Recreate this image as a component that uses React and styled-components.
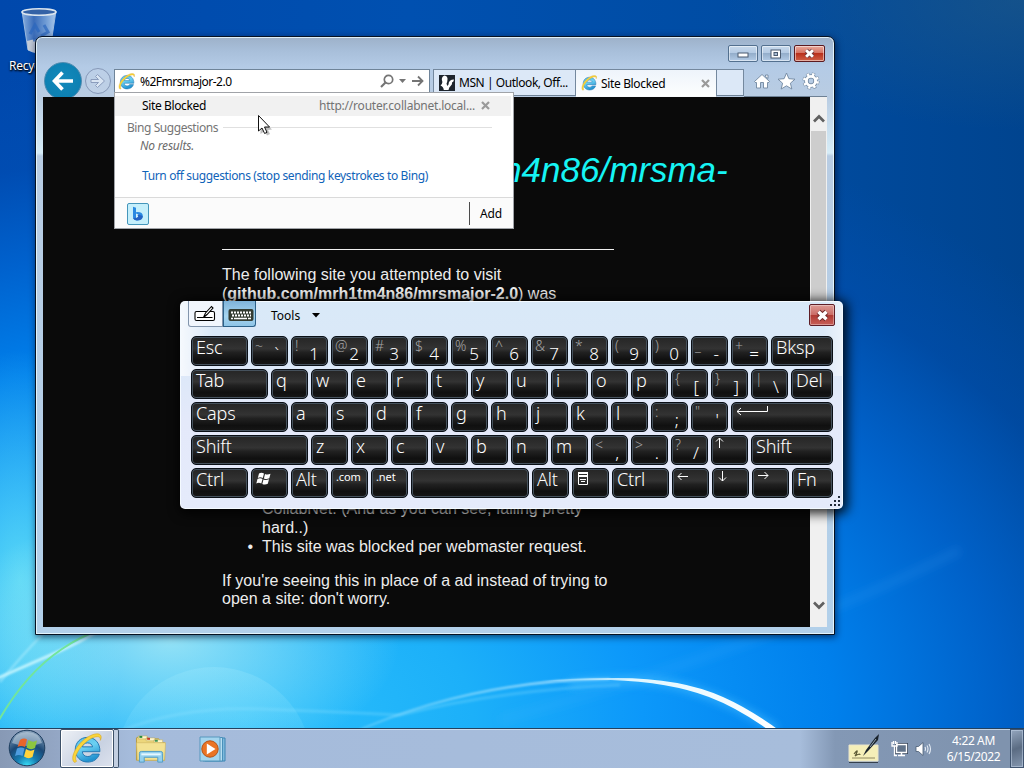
import React from "react";
import styled, { createGlobalStyle, css } from "styled-components";

const GlobalStyle = createGlobalStyle`
  * { box-sizing: border-box; }
  html, body { margin: 0; padding: 0; overflow: hidden; }
  body { font-family: "Noto Sans", "Open Sans", sans-serif; font-size: 12px; color: #000; }
  svg { display: block; flex: none; }
`;

const Desktop = styled.main`
  position: relative;
  width: 1024px;
  height: 768px;
  overflow: hidden;
  display: flex;
  flex-direction: column;
  justify-content: space-between;
  background:
    radial-gradient(ellipse 230px 130px at 170px 640px, rgba(185, 240, 245, 0.75), rgba(150, 230, 245, 0) 100%),
    radial-gradient(ellipse 110px 230px at 20px 580px, rgba(110, 232, 245, 0.75), rgba(90, 220, 245, 0) 100%),
    radial-gradient(ellipse 300px 130px at 1024px 0, rgba(40, 95, 135, 0.5), rgba(20, 80, 135, 0) 100%),
    radial-gradient(ellipse 1060px 660px at 240px 720px, #2cc0fc 0%, #1cb0f9 22%, #0c98fa 38%, #0080ec 56%, rgba(0, 104, 214, 0.8) 72%, rgba(0, 82, 186, 0.4) 86%, rgba(0, 72, 170, 0) 100%),
    linear-gradient(90deg, #0048ac 0%, #0050b0 40%, #004ca2 75%, #00448f 100%);
`;

const Wallpaper = styled.svg`
  position: absolute;
  inset: 0;
`;

const DesktopIcon = styled.div`
  width: 64px;
  margin-left: 7px;
  padding-top: 7px;
  display: flex;
  flex-direction: column;
  align-items: center;
`;

const IconCaption = styled.span`
  margin-top: 2px;
  color: #fff;
  font-size: 12px;
  line-height: 18px;
  letter-spacing: -0.3px;
  white-space: nowrap;
  text-shadow: 0 1px 2px #000, 1px 1px 2px #000;
`;

const BrowserWindow = styled.section`
  position: absolute;
  z-index: 0;
  left: 35px;
  top: 36px;
  width: 800px;
  height: 599px;
  display: flex;
  flex-direction: column;
  padding: 0 7px 7px;
  border: 1px solid #061222;
  border-radius: 7px 7px 0 0;
  background:
    linear-gradient(180deg, rgba(255, 255, 255, 0) 60px, rgba(225, 248, 255, 0.75) 116px, rgba(255, 255, 255, 0) 119px),
    linear-gradient(180deg, #9db1c9 0, #a8bfda 14px, #b4cbe6 30px, #b9cce2 60px, #b2d0ea 100%);
  box-shadow: inset 0 0 0 1px rgba(235, 250, 255, 0.85), 1px 2px 7px rgba(0, 10, 40, 0.65);
`;

const Caption = styled.header`
  height: 32px;
  flex: none;
  display: flex;
  justify-content: flex-end;
  gap: 3px;
  padding: 8px 2px 0 0;
`;

const closeFill = css`
  border-color: #5b1a20;
  background: linear-gradient(180deg, #e9a99c 0, #d67363 45%, #b9301c 50%, #cf6047 100%);
`;

const CaptionButton = styled.button`
  width: ${(p) => (p.$close ? 31 : 30)}px;
  height: 17px;
  padding: 0;
  display: flex;
  align-items: center;
  justify-content: center;
  border: 1px solid #53708f;
  border-radius: 2px;
  background: linear-gradient(180deg, #c7d9ec 0, #b5cbe4 45%, #94aecb 50%, #b3cbe6 100%);
  box-shadow: inset 0 0 0 1px rgba(255, 255, 255, 0.5);
  ${(p) => p.$close && closeFill}
`;

const NavRow = styled.div`
  height: 28px;
  flex: none;
  display: flex;
  align-items: flex-start;
`;

const BackButton = styled.button`
  width: 38px;
  height: 38px;
  margin: -7px 3px 0 1px;
  padding: 0;
  flex: none;
  display: flex;
  align-items: center;
  justify-content: center;
  border: 1px solid #4d8bb0;
  border-radius: 50%;
  background: radial-gradient(circle at 50% 45%, #1289bb, #0d80b2 70%, #2e8cb8);
`;

const ForwardButton = styled.button`
  width: 26px;
  height: 26px;
  margin: -1px 3px 0 0;
  padding: 0;
  flex: none;
  display: flex;
  align-items: center;
  justify-content: center;
  border: 1px solid #8799b8;
  border-radius: 50%;
  background: rgba(200, 215, 235, 0.35);
`;

const AddressBar = styled.div`
  position: relative;
  width: 316px;
  height: 24px;
  padding: 0 5px 0 3px;
  display: flex;
  align-items: center;
  border: 1px solid #6f8499;
  background: #fff;
`;

const AddressText = styled.span`
  flex: 1;
  padding-left: 5px;
  font-size: 12px;
  letter-spacing: -0.5px;
`;

const AddressTools = styled.div`
  display: flex;
  align-items: center;
  gap: 5px;
`;

const Suggestions = styled.div`
  position: absolute;
  z-index: 3;
  left: -1px;
  top: 22px;
  width: 400px;
  height: 137px;
  display: flex;
  flex-direction: column;
  border: 1px solid #a0a3a8;
  background: #fff;
`;

const SuggestionRow = styled.div`
  height: 20px;
  margin: 3px 2px 0 0;
  padding: 0 21px 1px 27px;
  display: flex;
  align-items: center;
  background: #f1f1f1;
`;

const SuggestionTitle = styled.span`
  flex: 1;
  letter-spacing: -0.37px;
`;

const SuggestionUrl = styled.span`
  margin-right: 6px;
  color: #737373;
  letter-spacing: -0.22px;
`;

const GroupHeading = styled.div`
  height: 22px;
  padding: 1px 21px 0 12px;
  display: flex;
  align-items: center;
  gap: 5px;
  color: #757575;
  letter-spacing: -0.43px;
  &::after { content: ""; flex: 1; height: 1px; background: #e0e0e0; }
`;

const EmptyNote = styled.em`
  margin-top: 1px;
  padding-left: 25px;
  line-height: 14px;
  color: #6b6b6b;
  letter-spacing: -0.2px;
`;

const SuggestionLink = styled.a`
  margin-top: 14px;
  padding-left: 27px;
  line-height: 17px;
  color: #0f63b9;
  letter-spacing: -0.37px;
`;

const SuggestionFooter = styled.div`
  height: 31px;
  margin-top: auto;
  padding: 1px 0 0 12px;
  display: flex;
  align-items: center;
  justify-content: space-between;
  border-top: 1px solid #dadada;
  background: #fbfbfb;
`;

const BingTile = styled.div`
  width: 22px;
  height: 22px;
  display: flex;
  align-items: center;
  justify-content: center;
  border: 1px solid #4596bb;
  border-radius: 2px;
  background: #c5effb;
`;

const AddButton = styled.div`
  height: 23px;
  width: 44px;
  padding-right: 1px;
  display: flex;
  align-items: center;
  justify-content: center;
  border-left: 1px solid #4c4c4c;
  letter-spacing: -0.2px;
`;

const TabStrip = styled.div`
  flex: 1;
  height: 28px;
  margin-left: 3px;
  display: flex;
  align-items: flex-start;
`;

const Tab = styled.div`
  width: ${(p) => p.$width}px;
  height: ${(p) => (p.$active ? 28 : 27)}px;
  padding: 0 6px 0 5px;
  display: flex;
  align-items: center;
  gap: 4px;
  border: 1px solid #74889e;
  border-left-width: ${(p) => (p.$first ? 1 : 0)}px;
  border-bottom-color: ${(p) => (p.$active ? "#f8fafc" : "#6e8195")};
  background: ${(p) => (p.$active ? "linear-gradient(180deg, #eef4fb, #fdfefe)" : "#dce8f7")};
`;

const TabTitle = styled.span`
  flex: 1;
  white-space: nowrap;
  letter-spacing: ${(p) => p.$tracking}px;
`;

const CommandIcons = styled.div`
  flex: 1;
  height: 28px;
  padding: 0 7px 4px 9px;
  display: flex;
  align-items: center;
  justify-content: space-between;
  border-bottom: 1px solid #6e8195;
`;

const Viewport = styled.div`
  position: relative;
  flex: 1;
  min-height: 0;
  display: flex;
  background: #0a0a0a;
`;

const PageBody = styled.article`
  flex: 1;
  min-width: 0;
  overflow: hidden;
  padding-left: 179px;
  color: #ededed;
  font: 16px/18.4px "Liberation Sans", Arial, sans-serif;
`;

const PageTitle = styled.h1`
  margin: 52px 0 0;
  height: 100px;
  color: #16f4f4;
  font-size: 35px;
  font-weight: 400;
  font-style: italic;
  line-height: 42px;
  white-space: nowrap;
`;

const Rule = styled.hr`
  width: 392px;
  height: 1px;
  margin: 0;
  border: 0;
  background: #f0f0f0;
`;

const Paragraph = styled.p`
  width: 392px;
  margin: ${(p) => p.$top}px 0 0;
`;

const ReasonList = styled.ul`
  width: 392px;
  height: 253px;
  margin: 0;
  padding-left: 40px;
  display: flex;
  flex-direction: column;
  justify-content: flex-end;
  gap: 0.6px;
`;

const Reason = styled.li`
  display: list-item;
  &::marker { content: "${(p) => (p.$continued ? "" : "•\\00a0\\00a0")}"; }
`;

const Scrollbar = styled.div`
  width: 17px;
  display: flex;
  flex-direction: column;
  align-items: center;
  background: #f0f0f0;
`;

const ScrollArrow = styled.div`
  height: ${(p) => p.$height}px;
  width: 17px;
  display: flex;
  justify-content: center;
  padding-top: ${(p) => p.$offset}px;
`;

const ScrollThumb = styled.div`
  width: 15px;
  height: 290px;
  background: #cdcdcd;
`;

const KeyboardPanel = styled.section`
  position: absolute;
  z-index: 1;
  left: 180px;
  top: 301px;
  width: 663px;
  height: 208px;
  display: flex;
  flex-direction: column;
  padding: 0 10px 0 11px;
  border-radius: 5px;
  background:
    linear-gradient(90deg, rgba(255, 255, 255, 0.75), rgba(255, 255, 255, 0) 5%, rgba(255, 255, 255, 0) 97%, rgba(255, 255, 255, 0.5)) 0 0 / 100% 75px no-repeat,
    linear-gradient(180deg, #d9e9f8 0, #dbe8f8 60px, #e4e9fa 120px, #e5ebfb 100%);
  box-shadow: inset 0 0 0 1px #f4faff, 2px 2px 11px 3px rgba(0, 0, 0, 0.8);
`;

const PanelHeader = styled.header`
  height: 35px;
  flex: none;
  display: flex;
  align-items: flex-start;
  margin: 0 -3px;
`;

const ModeTab = styled.div`
  width: ${(p) => (p.$active ? 33 : 35)}px;
  height: 26px;
  padding: ${(p) => (p.$active ? "2px 0 0 2px" : "0 2px 0 0")};
  display: flex;
  align-items: center;
  justify-content: center;
  border: 1px solid ${(p) => (p.$active ? "#2b6088" : "#8295ac")};
  border-top: 0;
  border-radius: ${(p) => (p.$active ? "0 0 3px 0" : "0 0 0 3px")};
  background: ${(p) => (p.$active ? "linear-gradient(180deg, #7fb3d9, #a6d5f0 60%, #8ec4e6)" : "#f1f6fd")};
`;

const ToolsMenu = styled.div`
  flex: 1;
  height: 29px;
  padding-left: 15px;
  display: flex;
  align-items: center;
  gap: 12px;
`;

const PanelClose = styled.button`
  width: 26px;
  height: 22px;
  margin: 3px 1px 0 0;
  padding: 0;
  display: flex;
  align-items: center;
  justify-content: center;
  border: 1px solid #5e1d26;
  border-radius: 2px;
  background: linear-gradient(180deg, #dc9a94 0, #cb6d67 48%, #b03a33 52%, #c75f58 100%);
  box-shadow: inset 0 0 0 1px rgba(255, 255, 255, 0.35);
`;

const KeyRows = styled.div`
  display: flex;
  flex-direction: column;
  gap: 3px;
`;

const KeyRow = styled.div`
  display: flex;
  gap: 3px;
`;

const KeyCap = styled.div`
  width: ${(p) => p.$width}px;
  height: 30px;
  padding: ${(p) => (p.$dual ? "0 8px 0 3px" : "0 0 0 5px")};
  display: flex;
  align-items: flex-start;
  justify-content: ${(p) => (p.$dual ? "space-between" : "flex-start")};
  overflow: hidden;
  border: 1px solid #0a0f16;
  border-radius: 5px;
  background: linear-gradient(180deg, #252525 0, #333 42%, #212121 55%, #101010 80%, #161616 100%);
  box-shadow: inset 0 0 0 1px #46525d;
  color: #fff;
`;

const KeyLabel = styled.span`
  margin-left: -1px;
  font-size: ${(p) => (p.$small ? 11 : 18)}px;
  line-height: ${(p) => (p.$small ? 16 : 21)}px;
  letter-spacing: ${(p) => (p.$small ? -0.1 : -0.15)}px;
  font-weight: ${(p) => (p.$small ? 400 : 350)};
  white-space: nowrap;
`;

const ShiftLabel = styled.span`
  color: #a6a6a6;
  font-size: 14px;
  font-weight: 350;
  line-height: 18px;
`;

const MainLabel = styled.span`
  font-size: 17px;
  font-weight: 350;
  line-height: 34px;
`;

const KeyGlyph = styled.div`
  margin-left: ${(p) => p.$shift}px;
  padding-top: ${(p) => p.$top}px;
`;

const Grip = styled.svg`
  position: absolute;
  right: 3px;
  bottom: 3px;
`;

const Pointer = styled.svg`
  position: absolute;
  z-index: 2;
  left: 257px;
  top: 114px;
`;

const Taskbar = styled.footer`
  position: relative;
  height: 40px;
  display: flex;
  align-items: center;
  border-top: 1px solid #23415f;
  background: linear-gradient(90deg, #8799b5 0, #93a6c4 55px, #a5bbdb 130px, #a7bddb 800px, #8398b5 835px, #7f93ae 1000px);
  box-shadow: inset 0 1px 0 rgba(222, 236, 250, 0.7);
`;

const StartButton = styled.div`
  width: 60px;
  height: 39px;
  padding-left: 8px;
`;

const TaskButton = styled.div`
  width: 54px;
  height: 39px;
  padding-right: 2px;
  display: flex;
  align-items: center;
  justify-content: center;
  border: 1px solid #3c5068;
  border-radius: 2px;
  background: linear-gradient(135deg, #eef1f6, #c9d2e2 60%, #dce2ee);
  box-shadow: inset 0 0 0 1px #fff;
`;

const TaskStack = styled.div`
  width: 5px;
  height: 39px;
  border: 1px solid #3c5068;
  border-left: 0;
  border-radius: 0 2px 2px 0;
  background: #c3cfe1;
`;

const PinnedIcon = styled.div`
  margin-left: ${(p) => p.$gap}px;
  padding-top: 2px;
`;

const Tray = styled.div`
  margin-left: auto;
  height: 39px;
  display: flex;
  align-items: center;
`;

const TrayIcon = styled.div`
  margin-right: ${(p) => p.$gap}px;
  padding-top: ${(p) => p.$drop || 0}px;
`;

const Clock = styled.div`
  width: 74px;
  text-align: center;
  color: #fff;
  font-size: 12px;
  line-height: 16px;
  letter-spacing: -0.38px;
  padding: 1px 0 0 1px;
`;

const ShowDesktop = styled.div`
  width: 14px;
  height: 39px;
  border: 1px solid #40546f;
  background: linear-gradient(160deg, #94a6be, #5b6c83 50%, #8496ae);
  box-shadow: inset 0 0 0 1px rgba(200, 215, 235, 0.5);
`;

function IeLogo({ size, id }) {
  return (
    <svg width={size} height={size} viewBox="0 0 32 32">
      <defs>
        <linearGradient id={id} x1="0" y1="0" x2="0.4" y2="1">
          <stop offset="0" stopColor="#55bce6" />
          <stop offset="0.5" stopColor="#6bd0f2" />
          <stop offset="1" stopColor="#2292cf" />
        </linearGradient>
      </defs>
      <path
        fill={`url(#${id})`}
        stroke="#2277b2"
        strokeWidth="1"
        fillRule="evenodd"
        d="M17 4.5C9.6 4.5 4.4 10 4.4 17.2S9.8 30 17.2 30c5.900 0 10.400-3 12-8.200h-7.200c-.9 1.600-2.600 2.500-4.700 2.500-3.100 0-5.400-1.800-5.600-5h18.100C30.200 10.700 25 4.500 17 4.500Zm-5.200 9.800c.5-2.600 2.500-4.100 5.300-4.100 2.700 0 4.700 1.500 5.200 4.100Z"
      />
      <path
        fill="#fad53a"
        stroke="#d5a323"
        strokeWidth="0.6"
        d="M3.400 30.300C-.8 26.500 3.500 16.300 11 9 18 2.200 27.700-1.300 30.500 2.200c1.100 1.500.7 3.600-.2 5.400.1-2-.2-3.200-1.600-3.600C24.600 2.800 17.700 6.700 12.300 12.400 6.500 18.500 2.800 26 5.800 29.200c-.7.700-1.600 1.200-2.400 1.100Z"
      />
    </svg>
  );
}

function CloseGlyph({ size, outline }) {
  return (
    <svg width={size} height={size} viewBox="0 0 12 12">
      <path d="M2.300 2.500 9.700 9.500M9.700 2.500 2.300 9.500" stroke={outline} strokeWidth="5" />
      <path d="M2.300 2.500 9.700 9.500M9.700 2.500 2.300 9.500" stroke="#fff" strokeWidth="3.200" />
    </svg>
  );
}

function SmallX() {
  return (
    <svg width="9" height="9" viewBox="0 0 9 9">
      <path d="M1 1 8 8M8 1 1 8" stroke="#9a9a9a" strokeWidth="2.200" />
    </svg>
  );
}

function Arrow({ rotate }) {
  return (
    <svg width="12" height="12" viewBox="0 0 12 12">
      <path
        transform={`rotate(${rotate} 6 6)`}
        d="M1 6.500H11M4.500 3 1 6.500 4.500 10"
        fill="none"
        stroke="#fff"
        strokeWidth="1"
      />
    </svg>
  );
}

const glyphs = {
  win: (
    <svg width="16" height="14" viewBox="0 0 16 14">
      <g fill="#fff">
        <path d="M3 1.500Q5.500.2 8 1.600L6.800 6Q4.300 4.700 1.800 6Z" />
        <path d="M9 2Q11.500 3.200 14.500 1.800L13.300 6.200Q10.500 7.600 7.900 6.400Z" />
        <path d="M1.500 7Q4 5.700 6.500 7L5.300 11.500Q2.800 10.200.3 11.500Z" />
        <path d="M7.500 7.500Q10 8.700 13 7.300L11.800 11.800Q9 13.200 6.300 12Z" />
      </g>
    </svg>
  ),
  menu: (
    <svg width="13" height="14" viewBox="0 0 13 14">
      <path d="M1.500 1v11.500h9V1" fill="none" stroke="#fff" />
      <path d="M1 1h10M1 4h10" stroke="#fff" strokeWidth="2" />
      <path d="M3 7.500h6M4 9.500h4" stroke="#fff" />
    </svg>
  ),
  enter: (
    <svg width="34" height="12" viewBox="0 0 34 12">
      <path d="M1 7.500H31.500V2M5 4 1 7.500 5 11" fill="none" stroke="#fff" />
    </svg>
  ),
  up: <Arrow rotate={90} />,
  down: <Arrow rotate={-90} />,
  left: <Arrow rotate={0} />,
  right: <Arrow rotate={180} />,
};

const glyphShift = { win: -1, menu: -1, enter: -1, up: -3, down: -2, left: -1, right: -1 };

const letters = (text) => text.split("").map((c) => ({ label: c }));
const pairs = (list) => list.map(([shift, main]) => ({ shift, main }));

const rows = [
  [
    { label: "Esc", w: 57 },
    ...pairs([["~", "`"], ["!", "1"], ["@", "2"], ["#", "3"], ["$", "4"], ["%", "5"], ["^", "6"], ["&", "7"], ["*", "8"], ["(", "9"], [")", "0"], ["_", "-"], ["+", "="]]),
    { label: "Bksp", w: 62 },
  ],
  [{ label: "Tab", w: 77 }, ...letters("qwertyuiop"), ...pairs([["{", "["], ["}", "]"], ["|", "\\"]]), { label: "Del", w: 42 }],
  [{ label: "Caps", w: 97 }, ...letters("asdfghjkl"), ...pairs([[":", ";"], ['"', "'"]]), { glyph: "enter", w: 102 }],
  [{ label: "Shift", w: 117 }, ...letters("zxcvbnm"), ...pairs([["<", ","], [">", "."], ["?", "/"]]), { glyph: "up" }, { label: "Shift", w: 82 }],
  [
    { label: "Ctrl", w: 57 }, { glyph: "win" }, { label: "Alt" }, { label: ".com", small: true }, { label: ".net", small: true },
    { label: "", w: 118 }, { label: "Alt" }, { glyph: "menu" }, { label: "Ctrl", w: 57 },
    { glyph: "left" }, { glyph: "down" }, { glyph: "right" }, { label: "Fn", w: 41 },
  ],
];

function Key({ item }) {
  return (
    <KeyCap $width={item.w || 37} $dual={Boolean(item.shift)}>
      {item.shift && <ShiftLabel>{item.shift}</ShiftLabel>}
      {item.main && <MainLabel>{item.main}</MainLabel>}
      {item.label && <KeyLabel $small={item.small}>{item.label}</KeyLabel>}
      {item.glyph && (
        <KeyGlyph $shift={glyphShift[item.glyph]} $top={item.glyph === "win" || item.glyph === "menu" ? 3 : 1}>
          {glyphs[item.glyph]}
        </KeyGlyph>
      )}
    </KeyCap>
  );
}

function TouchKeyboard() {
  return (
    <KeyboardPanel>
      <PanelHeader>
        <ModeTab>
          <svg width="22" height="18" viewBox="0 0 22 18">
            <rect x="1" y="6.500" width="19.500" height="9" rx="1.500" fill="#fff" stroke="#000" strokeWidth="1.100" />
            <path d="M3 12.500h15.500" stroke="#000" />
            <path d="M9.500 12.500 11.500 8 17.500 1.500 19 3 13 9.500Z" fill="#fff" stroke="#000" strokeWidth="1.100" />
          </svg>
        </ModeTab>
        <ModeTab $active>
          <svg width="26" height="14" viewBox="0 0 26 14">
            <rect x="0.500" y="1" width="25" height="12" rx="2" fill="#333b31" />
            <path d="M3 4.500H23M4 7.500H23" stroke="#fff" strokeWidth="2" strokeDasharray="2 1" />
            <path d="M3 10.500H5M6 10.500H19M20 10.500H23" stroke="#fff" strokeWidth="1.600" />
          </svg>
        </ModeTab>
        <ToolsMenu>
          Tools
          <svg width="8" height="5" viewBox="0 0 8 5"><path d="M0 0H8L4 4.500Z" /></svg>
        </ToolsMenu>
        <PanelClose><CloseGlyph size={13} outline="#702a2a" /></PanelClose>
      </PanelHeader>
      <KeyRows>
        {rows.map((row, r) => (
          <KeyRow key={r}>{row.map((item, i) => <Key key={i} item={item} />)}</KeyRow>
        ))}
      </KeyRows>
      <Grip width="10" height="10" viewBox="0 0 10 10" fill="#222c3a">
        <path d="M8 0h2v2H8zM4 4h2v2H4zM8 4h2v2H8zM0 8h2v2H0zM4 8h2v2H4zM8 8h2v2H8z" />
      </Grip>
    </KeyboardPanel>
  );
}

function SuggestionPanel() {
  return (
    <Suggestions>
      <SuggestionRow>
        <SuggestionTitle>Site Blocked</SuggestionTitle>
        <SuggestionUrl>http://router.collabnet.local...</SuggestionUrl>
        <SmallX />
      </SuggestionRow>
      <GroupHeading>Bing Suggestions</GroupHeading>
      <EmptyNote>No results.</EmptyNote>
      <SuggestionLink>Turn off suggestions (stop sending keystrokes to Bing)</SuggestionLink>
      <SuggestionFooter>
        <BingTile>
          <svg width="12" height="15" viewBox="0 0 12 15">
            <path d="M1 .8 4 1.800V6.200Q10.800 5.500 10.800 10T4.500 14.400Q1 14 1 11Z" fill="#2a8ae2" />
            <path d="M4 11.800 6.300 10.500 5.300 8 8.500 9.300 10.800 10Q10.500 14.500 5 14.500 1.800 14.300 1 12Z" fill="#2464c4" />
            <path d="M4 7.500 6.800 8.700 5.500 9 6.200 10.700 4 11.900Z" fill="#d5f3fc" />
          </svg>
        </BingTile>
        <AddButton>Add</AddButton>
      </SuggestionFooter>
    </Suggestions>
  );
}

function Browser() {
  return (
    <BrowserWindow>
      <Caption>
        <CaptionButton>
          <svg width="12" height="9" viewBox="0 0 12 9"><rect x="1" y="4" width="10" height="4" fill="#fff" stroke="#4b5b70" /></svg>
        </CaptionButton>
        <CaptionButton>
          <svg width="12" height="10" viewBox="0 0 12 10">
            <rect x="1" y="1" width="9.500" height="8" fill="#fff" stroke="#4b5b70" />
            <rect x="4" y="3.500" width="3.500" height="3" fill="#a9bdd5" stroke="#4b5b70" />
          </svg>
        </CaptionButton>
        <CaptionButton $close><CloseGlyph size={11} outline="#6d3a3e" /></CaptionButton>
      </Caption>
      <NavRow>
        <BackButton>
          <svg width="22" height="20" viewBox="0 0 22 20">
            <path d="M2 10H21M10.500 1.500 2.500 10 10.500 18.500" fill="none" stroke="#fff" strokeWidth="3.600" />
          </svg>
        </BackButton>
        <ForwardButton>
          <svg width="18" height="16" viewBox="0 0 18 16">
            <path d="M2 6.500H9.500L6.500 3.500 8.500 1.500 15.500 8 8.500 14.500 6.500 12.500 9.500 9.500H2Z" fill="#d9e5f3" stroke="#8b9dbd" />
          </svg>
        </ForwardButton>
        <AddressBar>
          <IeLogo size={17} id="ie-address" />
          <AddressText>%2Fmrsmajor-2.0</AddressText>
          <AddressTools>
            <svg width="14" height="14" viewBox="0 0 14 14">
              <circle cx="8.500" cy="5.500" r="4.200" fill="none" stroke="#747474" strokeWidth="1.700" />
              <path d="M5.500 8.500 1 13" stroke="#747474" strokeWidth="2.200" />
            </svg>
            <svg width="7" height="4" viewBox="0 0 7 4"><path d="M0 0H7L3.500 4Z" fill="#747474" /></svg>
            <svg width="13" height="12" viewBox="0 0 13 12">
              <path d="M1 6H11.500M7 1.500 11.500 6 7 10.500" fill="none" stroke="#747474" strokeWidth="1.800" />
            </svg>
          </AddressTools>
          <SuggestionPanel />
        </AddressBar>
        <TabStrip>
          <Tab $width={143} $first>
            <svg width="16" height="16" viewBox="0 0 16 16">
              <rect width="16" height="16" fill="#1d242d" />
              <path d="M5.500.5Q8.800 1 8.500 4.500 8.400 7 7.500 8.500L8.300 11 9.500 9.500Q9.500 7 11 5.800 12.500 4.500 15 4.500 14.800 6.800 13 7.500 13.500 9.500 11.800 10.800 10 12 9.500 15H4.800Q4.500 11.500 1.500 10.500 3.200 9.500 3.400 7 1.500 2 5.500.5Z" fill="#fff" />
            </svg>
            <TabTitle $tracking={-0.44}>MSN | Outlook, Off...</TabTitle>
          </Tab>
          <Tab $width={141} $active>
            <IeLogo size={16} id="ie-tab" />
            <TabTitle $tracking={-0.35}>Site Blocked</TabTitle>
            <SmallX />
          </Tab>
          <Tab $width={27} />
          <CommandIcons>
            <svg width="18" height="16" viewBox="0 0 18 16">
              <path d="M1.500 8.500 9 1.500 16.500 8.500 15 10 14.500 9.500V15H10.500V9.500H7.500V15H3.500V9.500L3 10ZM12.500 2h2.500v3.500L12.500 3.500Z" fill="#fff" stroke="#71879f" strokeWidth="0.900" />
            </svg>
            <svg width="19" height="18" viewBox="0 0 19 18">
              <path d="M9.500 1 11.900 6.700 18 7.200 13.400 11.200 14.800 17 9.500 13.800 4.200 17 5.600 11.200 1 7.200 7.100 6.700Z" fill="#fff" stroke="#71879f" strokeWidth="0.900" />
            </svg>
            <svg width="18" height="18" viewBox="0 0 18 18">
              <circle cx="9" cy="9" r="6.500" fill="none" stroke="#71879f" strokeWidth="4" strokeDasharray="2.850 2.255" />
              <circle cx="9" cy="9" r="4.600" fill="none" stroke="#71879f" strokeWidth="4.400" />
              <circle cx="9" cy="9" r="6.500" fill="none" stroke="#fff" strokeWidth="3" strokeDasharray="2.250 2.855" strokeDashoffset="-0.300" />
              <circle cx="9" cy="9" r="4.600" fill="none" stroke="#fff" strokeWidth="2.900" />
            </svg>
          </CommandIcons>
        </TabStrip>
      </NavRow>
      <Viewport>
        <PageBody>
          <PageTitle>github.com/mrh1tm4n86/mrsma-</PageTitle>
          <Rule />
          <Paragraph $top={16.4}>
            The following site you attempted to visit (<b>github.com/mrh1tm4n86/mrsmajor-2.0</b>) was
          </Paragraph>
          <ReasonList>
            <Reason $continued>CollabNet. (And as you can see, failing pretty hard..)</Reason>
            <Reason>This site was blocked per webmaster request.</Reason>
          </ReasonList>
          <Paragraph $top={15.6}>
            If you're seeing this in place of a ad instead of trying to open a site: don't worry.
          </Paragraph>
        </PageBody>
        <Scrollbar>
          <ScrollArrow $height={34} $offset={16}>
            <svg width="12" height="10" viewBox="0 0 12 10"><path d="M1 8.500 6 3.500 11 8.500" fill="none" stroke="#606060" strokeWidth="2.700" /></svg>
          </ScrollArrow>
          <ScrollThumb />
          <ScrollArrow $height={206} $offset={180}>
            <svg width="12" height="10" viewBox="0 0 12 10"><path d="M1 1.500 6 6.500 11 1.500" fill="none" stroke="#606060" strokeWidth="2.700" /></svg>
          </ScrollArrow>
        </Scrollbar>
      </Viewport>
    </BrowserWindow>
  );
}

function Background() {
  return (
    <Wallpaper width="1024" height="768" viewBox="0 0 1024 768">
      <defs>
        <filter id="soft" x="-10%" y="-40%" width="120%" height="180%"><feGaussianBlur stdDeviation="1" /></filter>
        <filter id="softer" x="-20%" y="-50%" width="140%" height="200%"><feGaussianBlur stdDeviation="4" /></filter>
        <linearGradient id="bubble" x1="0" y1="0" x2="0" y2="1">
          <stop offset="0" stopColor="#aef0ff" stopOpacity="0.220" />
          <stop offset="0.600" stopColor="#6bdcff" stopOpacity="0.080" />
          <stop offset="1" stopColor="#6bdcff" stopOpacity="0" />
        </linearGradient>
        <linearGradient id="arc" x1="530" x2="780" y1="0" y2="0" gradientUnits="userSpaceOnUse">
          <stop offset="0" stopColor="#bfeaff" stopOpacity="0" />
          <stop offset="0.400" stopColor="#dff6ff" />
          <stop offset="1" stopColor="#fff" />
        </linearGradient>
        <linearGradient id="arcTail" x1="350" x2="660" y1="0" y2="0" gradientUnits="userSpaceOnUse">
          <stop offset="0" stopColor="#c8f1ff" stopOpacity="0.250" />
          <stop offset="0.700" stopColor="#d8f5ff" stopOpacity="0.800" />
          <stop offset="1" stopColor="#fff" stopOpacity="0.300" />
        </linearGradient>
      </defs>
      <circle cx="214" cy="765" r="98" fill="url(#bubble)" />
      <path d="M118 732Q180 706 260 709T400 715Q500 690 620 685" fill="none" stroke="#9be6ff" strokeOpacity="0.250" strokeWidth="3" filter="url(#soft)" />
      <path d="M350 734Q470 680 610 679" fill="none" stroke="url(#arcTail)" strokeWidth="2" filter="url(#soft)" />
      <path d="M500 720Q760 650 960 550" fill="none" stroke="#55b6ff" strokeOpacity="0.130" strokeWidth="9" filter="url(#softer)" />
      <path d="M570 684Q630 676 672 684 729 698 776 730" fill="none" stroke="#4abfff" strokeOpacity="0.700" strokeWidth="7" filter="url(#softer)" />
      <path d="M530 682Q570 678 610 678 679 677 723 697 750 709 780 731L770 731Q738 708 709 697 670 682 610 680Q570 680 530 682Z" fill="url(#arc)" />
      <path d="M-2 678Q30 664 62 650T130 610" fill="none" stroke="#d8fbff" strokeOpacity="0.850" strokeWidth="2.500" filter="url(#soft)" />
      <path d="M0 682Q22 655 44 633" fill="none" stroke="#bff4ff" strokeOpacity="0.500" strokeWidth="2" filter="url(#soft)" />
      <path d="M-1 720Q26 673 62 649 81 636 98 631" fill="none" stroke="#72e59b" strokeWidth="2" />
    </Wallpaper>
  );
}

function RecycleBin() {
  return (
    <svg width="40" height="48" viewBox="0 0 40 48">
      <defs>
        <linearGradient id="bin" x1="0" x2="1">
          <stop offset="0" stopColor="#8ab0df" />
          <stop offset="0.350" stopColor="#3a6cb9" />
          <stop offset="0.700" stopColor="#6f9bd4" />
          <stop offset="1" stopColor="#a9c7ea" />
        </linearGradient>
      </defs>
      <path d="M3 4 9 43Q20 49 31 43L37 4Z" fill="url(#bin)" stroke="#9dbbe0" />
      <path d="M8 34Q19 30 32 35L31 43Q20 49 9 43Z" fill="#d6d8dc" opacity="0.850" />
      <path d="M11 27 16 18 20 25M25 18 29 25 22 29M23 33H14" fill="none" stroke="#2b67bd" strokeWidth="3" opacity="0.700" />
      <ellipse cx="20" cy="5" rx="17" ry="3.300" fill="#3462a6" stroke="#dbe5ee" strokeWidth="1.600" />
    </svg>
  );
}

function StartOrb() {
  return (
    <svg width="38" height="38" viewBox="0 0 38 38">
      <defs>
        <radialGradient id="orb" cx="0.500" cy="1" r="1">
          <stop offset="0" stopColor="#39e0f8" />
          <stop offset="0.300" stopColor="#157cb1" />
          <stop offset="0.600" stopColor="#1b4876" />
          <stop offset="1" stopColor="#8ca4bd" />
        </radialGradient>
      </defs>
      <circle cx="19" cy="19" r="17.800" fill="url(#orb)" stroke="#1d3d5e" />
      <path d="M4 14Q7 3 19 3T34 14Q19 20 4 14Z" fill="#dce8f2" opacity="0.450" />
      <path d="M12 11Q16 8.500 19 10.500L17 18Q13 16 9.500 18Z" fill="#e9652b" />
      <path d="M20.500 11Q25 14 29 11.500L27 19Q23 21.500 18.500 18.500Z" fill="#8dc63f" />
      <path d="M9 19.500Q13 17.500 16.500 19.500L14.500 27Q11 25 7 27Z" fill="#4e9cdf" />
      <path d="M18 20Q22.500 23 26.500 20.500L24.500 28Q20.500 30.500 16 27.500Z" fill="#ffd33c" />
    </svg>
  );
}

function ExplorerIcon() {
  return (
    <svg width="34" height="31" viewBox="0 0 34 32">
      <path d="M2 4V27H31V9H27L25 5H15L13 3H4Z" fill="#ecd67b" stroke="#b69b45" />
      <path d="M4 2h9v3H4zM12 4h9v3h-9zM20 6h9v3h-9z" fill="#fff6cc" stroke="#bba552" strokeWidth="0.500" />
      <path d="M5 2h3v2H5z" fill="#258b3c" /><path d="M13 4h3v2h-3z" fill="#c93725" /><path d="M21 6h3v2h-3z" fill="#3c9252" />
      <path d="M2 9H32L31 27H3Z" fill="#f3e292" stroke="#cbb35e" strokeWidth="0.600" />
      <path d="M5 29V20Q5 18 7 18H27Q29 18 29 20V29H24V24H10V29Z" fill="#94d0ee" stroke="#4f9cc5" />
      <path d="M7 21H27" stroke="#e5f8ff" strokeWidth="2" />
    </svg>
  );
}

function MediaPlayerIcon() {
  return (
    <svg width="28" height="27" viewBox="0 0 28 27">
      <path d="M6 2H26V25H6Z" fill="#7eb9dc" stroke="#3c86b4" />
      <path d="M4 1.500H23.500V25H4Z" fill="#b7def1" stroke="#4a90ba" />
      <path d="M1 1H21V25H1Z" fill="#a4d5ee" stroke="#5797bd" />
      <circle cx="11" cy="13" r="8.200" fill="#ea7424" stroke="#b65417" />
      <path d="M7.800 7.500 16.500 13 7.800 18.500Z" fill="#fff" />
    </svg>
  );
}

export default function App() {
  return (
    <>
      <GlobalStyle />
      <Desktop>
        <Background />
        <DesktopIcon>
          <RecycleBin />
          <IconCaption>Recycle Bin</IconCaption>
        </DesktopIcon>
        <Browser />
        <TouchKeyboard />
        <Pointer width="16" height="24" viewBox="0 0 16 24">
          <path d="M3.500 4V20L7.500 17 10 21.500 13 20 11 16 15 15.500Z" fill="#000" opacity="0.250" />
          <path d="M1.500 1.500V17L5 14 7.600 19.500 10 18.300 7.500 13H12.500Z" fill="#fff" stroke="#111" strokeWidth="1" />
        </Pointer>
        <Taskbar>
          <StartButton><StartOrb /></StartButton>
          <TaskButton><IeLogo size={31} id="ie-task" /></TaskButton>
          <TaskStack />
          <PinnedIcon $gap={15}><ExplorerIcon /></PinnedIcon>
          <PinnedIcon $gap={31}><MediaPlayerIcon /></PinnedIcon>
          <Tray>
            <TrayIcon $gap={11}>
              <svg width="32" height="32" viewBox="0 0 32 32">
                <path d="M1 12H30V28H1Z" fill="#f5efb8" stroke="#e9e5cc" />
                <path d="M1 29.500H30" stroke="#35404d" />
                <path d="M4 25H27" stroke="#766f4b" strokeWidth="0.800" />
                <path d="M6 21Q10 16 9 19T7 23Q12 20 12 22" fill="none" stroke="#5d5a35" strokeWidth="1.200" />
                <path d="M15 23 18 17 27 5 31 1 30 7 20 18Z" fill="#1a232c" />
                <path d="M22 14 28 6" stroke="#93a6b5" />
              </svg>
            </TrayIcon>
            <TrayIcon $gap={7} $drop={2}>
              <svg width="17" height="17" viewBox="0 0 17 17">
                <path d="M5.500 3.500H15.500V11.500H5.500Z" fill="#61738a" stroke="#344256" strokeWidth="3" />
                <path d="M5.500 3.500H15.500V11.500H5.500Z" fill="#61738a" stroke="#fff" strokeWidth="1.400" />
                <path d="M7 14.500H14M10.500 12V14" stroke="#fff" strokeWidth="1.500" />
                <path d="M1 1V5H6V1M2.500 0V3M4.500 0V3M3.500 5V14.500H6" fill="none" stroke="#fff" strokeWidth="1.300" />
              </svg>
            </TrayIcon>
            <TrayIcon $gap={4}>
              <svg width="17" height="16" viewBox="0 0 17 16">
                <path d="M1 5.500H3.500L8 1.500V14.500L3.500 10.500H1Z" fill="#fff" stroke="#485b72" strokeWidth="0.800" />
                <path d="M10 6Q11 8 10 10M12 4.500Q14 8 12 11.500M14 3Q17 8 14 13" fill="none" stroke="#e3ebf4" strokeWidth="1.100" />
              </svg>
            </TrayIcon>
            <Clock>
              <div>4:22 AM</div>
              <div>6/15/2022</div>
            </Clock>
            <ShowDesktop />
          </Tray>
        </Taskbar>
      </Desktop>
    </>
  );
}
